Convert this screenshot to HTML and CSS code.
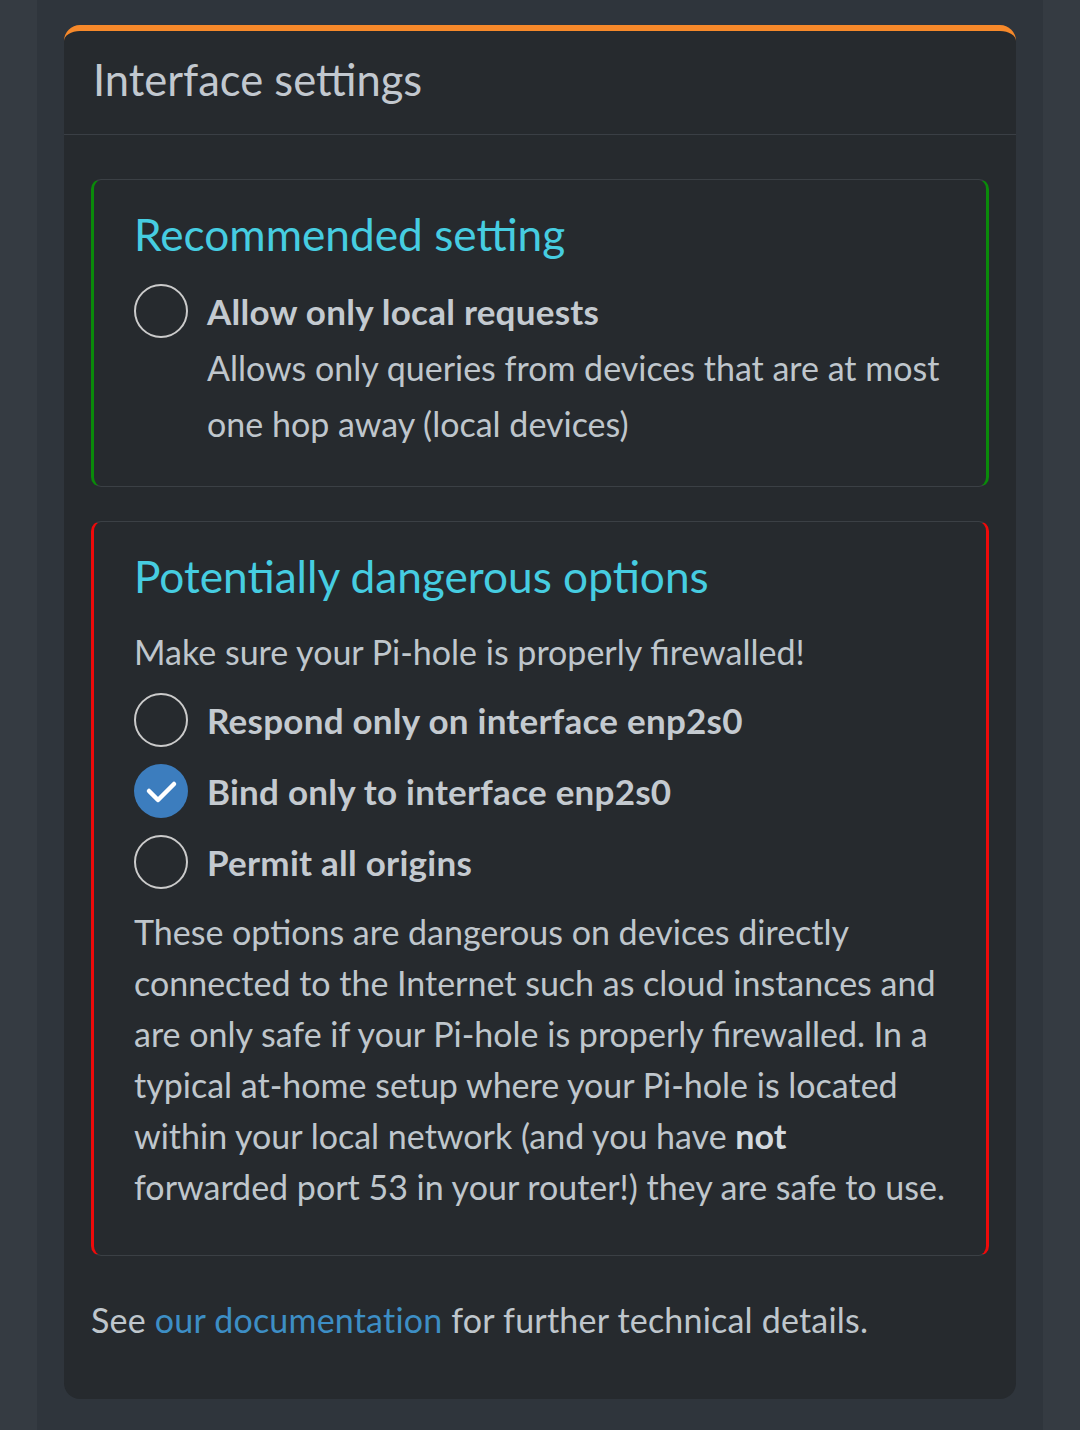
FILE: index.html
```html
<!DOCTYPE html>
<html lang="en">
<head>
    <meta charset="UTF-8">
    <meta name="viewport" content="width=device-width, initial-scale=1.0">
    <title>Interface settings</title>
    <link rel="stylesheet" href="styles.css">
</head>
<body>
    <div class="content">
        <div class="box">
            <div class="box-header">
                <h3 class="box-title">Interface settings</h3>
            </div>
            <div class="box-body">
                <div class="panel panel-ok">
                    <h4>Recommended setting</h4>
                    <label class="option">
                        <span class="radio"></span>
                        <span class="option-text">
                            <strong>Allow only local requests</strong>
                            <span class="hint">Allows only queries from devices that are at most one hop away (local devices)</span>
                        </span>
                    </label>
                </div>

                <div class="panel panel-danger">
                    <h4>Potentially dangerous options</h4>
                    <p class="warn">Make sure your Pi-hole is properly firewalled!</p>
                    <div class="options">
                        <label class="option">
                            <span class="radio"></span>
                            <span class="option-text"><strong>Respond only on interface enp2s0</strong></span>
                        </label>
                        <label class="option">
                            <span class="radio checked">
                                <svg viewBox="0 0 54 54" width="54" height="54"><path d="M15 27 L24 36 L40 20" fill="none" stroke="#fff" stroke-width="4.5" stroke-linecap="round" stroke-linejoin="round"/></svg>
                            </span>
                            <span class="option-text"><strong>Bind only to interface enp2s0</strong></span>
                        </label>
                        <label class="option">
                            <span class="radio"></span>
                            <span class="option-text"><strong>Permit all origins</strong></span>
                        </label>
                    </div>
                    <p class="note">These options are dangerous on devices directly connected to the Internet such as cloud instances and are only safe if your Pi-hole is properly firewalled. In a typical at-home setup where your Pi-hole is located within your local network (and you have <b>not</b> forwarded port 53 in your router!) they are safe to use.</p>
                </div>

                <p class="footnote">See <a href="#">our documentation</a> for further technical details.</p>
            </div>
        </div>
    </div>
</body>
</html>
```

FILE: styles.css
```css
body {
    margin: 0;
    background: #353b42;
    font-family: Lato, "Open Sans", sans-serif;
    font-size: 34px;
    color: #bfc6cc;
}
.content {
    margin: 0 37px;
    min-height: 100vh;
    padding: 25px 27px 0;
    box-sizing: border-box;
    background: #2f353c;
}
.box {
    background: #262a2e;
    border-top: 6px solid #f7892a;
    border-radius: 16px;
}
.box-header {
    height: 103px;
    display: flex;
    align-items: center;
    padding: 0 29px;
    border-bottom: 1px solid #3a3f45;
}
.box-title {
    margin: 0 0 8px;
    font-size: 43.5px;
    font-weight: normal;
    color: #c2c8cf;
}
.box-body {
    padding: 44px 27px 54px;
}
.panel {
    border: 1px solid #3b4045;
    border-left-width: 3px;
    border-right-width: 3px;
    border-radius: 10px;
    padding: 24px 40px 34px;
}
.panel-ok {
    border-left-color: #0a8a0a;
    border-right-color: #0a8a0a;
}
.panel-danger {
    margin-top: 34px;
    border-left-color: #ee0a0a;
    border-right-color: #ee0a0a;
    padding-bottom: 43px;
}
.panel h4 {
    margin: 0 0 20px;
    font-size: 44.2px;
    line-height: 60px;
    font-weight: normal;
    color: #46cde1;
}
.option {
    display: flex;
    gap: 19px;
    align-items: flex-start;
    cursor: pointer;
}
.radio {
    flex: none;
    width: 54px;
    height: 54px;
    box-sizing: border-box;
    border: 2px solid #cbcbcb;
    border-radius: 50%;
}
.radio.checked {
    border: none;
    background: #3c7dbe;
}
.radio svg {
    display: block;
}
.option-text {
    display: flex;
    flex-direction: column;
}
.option-text strong {
    font-size: 35px;
    letter-spacing: 0.25px;
    line-height: 54px;
    color: #c4cad0;
}
.hint {
    line-height: 56px;
    margin-top: 2px;
}
.warn {
    margin: 0 0 16px;
    line-height: 51px;
}
.options {
    display: flex;
    flex-direction: column;
    gap: 17px;
}
.note {
    margin: 17px 0 0;
    line-height: 51px;
}
.note b {
    color: #d4d9de;
}
.footnote {
    margin: 38px 0 0;
    line-height: 51px;
    letter-spacing: 0.2px;
}
.footnote a {
    color: #3d8ec5;
    text-decoration: none;
}
```
